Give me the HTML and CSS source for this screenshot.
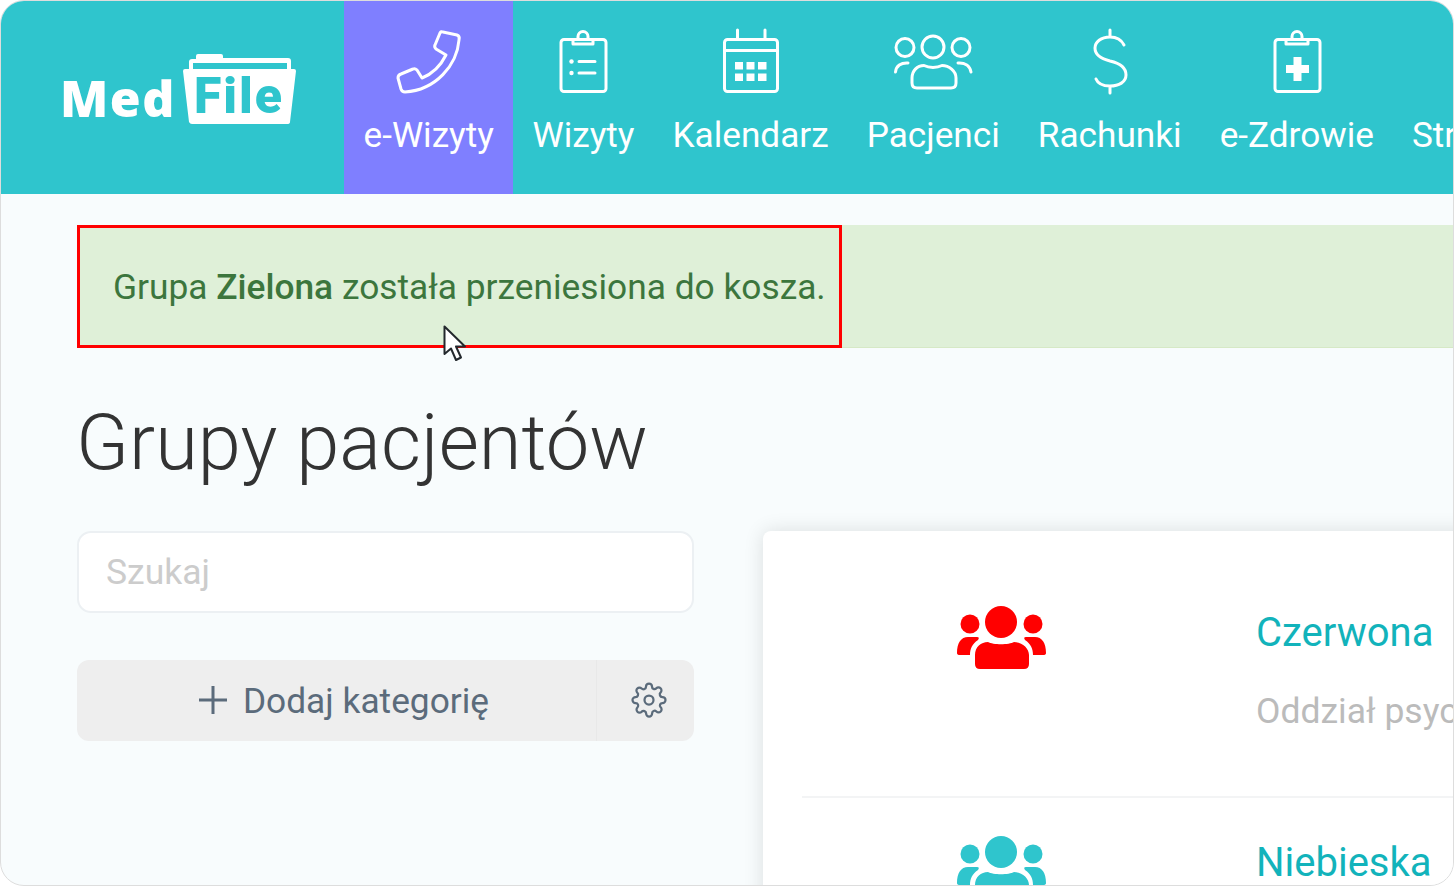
FILE: index.html
```html
<!DOCTYPE html>
<html lang="pl">

<head>
    <meta charset="UTF-8">
    <meta name="viewport" content="width=device-width, initial-scale=1.0">
    <title>Grupy pacjentów</title>
    <link rel="stylesheet" href="styles.css">
</head>

<body>
    <svg class="defs" width="0" height="0">
        <symbol id="group" viewBox="956 605 92 66">
            <circle cx="1001" cy="622" r="16" />
            <circle cx="970" cy="624" r="9.5" />
            <circle cx="1033" cy="624" r="9.5" />
            <path d="M975 664V655C975 647 981 642 988 642C993 645 1009 645 1014 642C1022 642 1029 648 1029 655V664Q1029 669 1024 669H980Q975 669 975 664Z" />
            <path d="M957 653C957 643 961 637 968 637H977Q980 637 978 640C972 644 970 649 970 655H960Q957 655 957 653Z" />
            <path d="M1046 653C1046 643 1042 637 1035 637H1026Q1023 637 1025 640C1031 644 1033 649 1033 655H1043Q1046 655 1046 653Z" />
        </symbol>
    </svg>

    <div class="frame">
        <header class="topbar">
            <a class="logo">
                <span class="logo-med">Med</span>
                <span class="logo-file">
                    <svg class="folder" viewBox="181 51 116 75">
                        <path d="M188 69V62Q188 59 191 59H195V56Q195 54 197 54H220Q222 54 222 56V58H287Q290 58 290 61V69H286V63H192V69Z" />
                        <path d="M182 71Q182 69 184 69H293Q295 69 295 71L289 122Q289 124 286 124H191Q189 124 188 122Z" />
                    </svg>
                    <span class="logo-file-text">File</span>
                </span>
            </a>
            <nav class="nav">
                <a class="nav-item active">
                    <svg class="nav-icon" viewBox="396 28 68 68" width="68">
                        <path d="M444 32L458 35Q461 36 460 40C458 65 437 90 406 92Q403 92 402 89L399 78Q399 75 402 74L414 69Q416 68 418 70L423 78C433 74 442 65 447 55L437 49Q435 47 436 45L441 33Q442 31 444 32Z" />
                    </svg>
                    e-Wizyty
                </a>
                <a class="nav-item">
                    <svg class="nav-icon" viewBox="550 28 68 68" width="68">
                        <rect x="562" y="39.5" width="45" height="52" rx="3" />
                        <path d="M574 39.5V44H594V39.5M579 39.5V36.5A5 5 0 0 1 589 36.5V39.5" />
                        <path d="M580 61.5H596M580 73H596" />
                        <circle class="solid" cx="572.5" cy="61.5" r="2.2" />
                        <circle class="solid" cx="572.5" cy="73" r="2.2" />
                    </svg>
                    Wizyty
                </a>
                <a class="nav-item">
                    <svg class="nav-icon" viewBox="717 28 68 68" width="68">
                        <rect x="724.5" y="39.5" width="53" height="52" rx="3" />
                        <path d="M724.5 50.5H777.5M737.5 30V39.5M765 30V39.5" />
                        <path class="solid" d="M735 62h8v7.500h-8zM746.500 62h8v7.500h-8zM758 62h8.500v7.500h-8.500zM735 73.500h8v7.500h-8zM746.500 73.500h8v7.500h-8zM758 73.500h8.500v7.500h-8.500z" />
                    </svg>
                    Kalendarz
                </a>
                <a class="nav-item">
                    <svg class="nav-icon" viewBox="892 28 82 68" width="82">
                        <circle cx="933" cy="47" r="11" />
                        <circle cx="905" cy="47.500" r="9" />
                        <circle cx="961" cy="47.500" r="9" />
                        <path d="M912 83V78C912 71 917 65.500 924 65.500C929 68 937 68 942 65.500C949 65.500 956 71 956 78V83Q956 88 951 88H917Q912 88 912 83Z" />
                        <path d="M895.500 72C896 66 901 62.500 908 63M971 72C970 66 965 62.500 958 63" />
                    </svg>
                    Pacjenci
                </a>
                <a class="nav-item">
                    <svg class="nav-icon" viewBox="1075 28 68 68" width="68">
                        <path d="M1123 45C1120 39 1115 37 1109 37C1100 37 1094 42 1094 48C1094 56 1101 59 1109 61C1118 63 1125 67 1125 75C1125 82 1118 86 1109 86C1102 86 1097 84 1095 79M1109 30V37M1109 86V93" />
                    </svg>
                    Rachunki
                </a>
                <a class="nav-item">
                    <svg class="nav-icon" viewBox="1262 28 68 68" width="68">
                        <rect x="1274" y="39.500" width="45" height="52" rx="3" />
                        <path d="M1285 39.500V44H1307V39.500M1291 39.500V36.500A5 5 0 0 1 1301 36.500V39.500" />
                        <path class="solid" d="M1292.500 57H1300.500V65H1308V73H1300.500V81H1292.500V73H1285V65H1292.500Z" />
                    </svg>
                    e-Zdrowie
                </a>
                <a class="nav-item">
                    <span class="nav-icon"></span>
                    Strony
                </a>
            </nav>
        </header>

        <main class="content">
            <div class="alert">
                <p>Grupa <b>Zielona</b> została przeniesiona do kosza.</p>
                <span class="highlight"></span>
                <svg class="cursor" viewBox="0 0 24 38" width="24" height="38">
                    <path d="M1.500 1.500V29L8 23.500L13 35L18 32.500L13 21.500H22Z" />
                </svg>
            </div>

            <h1>Grupy pacjentów</h1>

            <div class="columns">
                <aside class="side">
                    <input class="search" type="text" placeholder="Szukaj">
                    <div class="add-row">
                        <button class="add-btn">
                            <svg class="plus" viewBox="0 0 28 28" width="28" height="28">
                                <path d="M14 0V28M0 14H28" />
                            </svg>
                            Dodaj kategorię
                        </button>
                        <button class="gear-btn">
                            <svg class="gear" viewBox="0 0 24 24" width="36" height="36">
                                <circle cx="12" cy="12" r="3" />
                                <path d="M19.400 15a1.650 1.650 0 0 0 .33 1.820l.06.06a2 2 0 0 1 0 2.830 2 2 0 0 1-2.830 0l-.06-.06a1.650 1.650 0 0 0-1.820-.33 1.650 1.650 0 0 0-1 1.510V21a2 2 0 0 1-2 2 2 2 0 0 1-2-2v-.09A1.650 1.650 0 0 0 9 19.400a1.650 1.650 0 0 0-1.820.33l-.06.06a2 2 0 0 1-2.830 0 2 2 0 0 1 0-2.830l.06-.06a1.650 1.650 0 0 0 .33-1.820 1.650 1.650 0 0 0-1.510-1H3a2 2 0 0 1-2-2 2 2 0 0 1 2-2h.09A1.650 1.650 0 0 0 4.600 9a1.650 1.650 0 0 0-.33-1.820l-.06-.06a2 2 0 0 1 0-2.830 2 2 0 0 1 2.830 0l.06.06a1.650 1.650 0 0 0 1.820.33H9a1.650 1.650 0 0 0 1-1.510V3a2 2 0 0 1 2-2 2 2 0 0 1 2 2v.09a1.650 1.650 0 0 0 1 1.510 1.650 1.650 0 0 0 1.820-.33l.06-.06a2 2 0 0 1 2.830 0 2 2 0 0 1 0 2.830l-.06.06a1.650 1.650 0 0 0-.33 1.820V9a1.650 1.650 0 0 0 1.510 1H21a2 2 0 0 1 2 2 2 2 0 0 1-2 2h-.09a1.650 1.650 0 0 0-1.510 1z" />
                            </svg>
                        </button>
                    </div>
                </aside>

                <section class="card">
                    <div class="group-row">
                        <svg class="group-icon red"><use href="#group" /></svg>
                        <div class="group-text">
                            <a class="group-name">Czerwona</a>
                            <p class="group-desc">Oddział psychiatryczny</p>
                        </div>
                    </div>
                    <div class="group-row">
                        <svg class="group-icon teal"><use href="#group" /></svg>
                        <div class="group-text">
                            <a class="group-name">Niebieska</a>
                        </div>
                    </div>
                </section>
            </div>
        </main>
    </div>
</body>

</html>
```

FILE: styles.css
```css
* {
    margin: 0;
    padding: 0;
    box-sizing: border-box;
}

body {
    font-family: Roboto, "Liberation Sans", sans-serif;
    background-color: #fff;
}

.defs {
    display: block;
    height: 0;
}

.frame {
    width: 1454px;
    height: 886px;
    border: 1px solid #ddd;
    border-radius: 24px;
    overflow: hidden;
    background-color: #f8fcfd;
}

/* Górny pasek */
.topbar {
    display: flex;
    height: 193px;
    background-color: #2fc5cd;
    color: #fff;
}

.logo {
    display: flex;
    flex: none;
    width: 343px;
    padding: 50px 0 0 59px;
    gap: 6px;
}

.logo-med {
    width: 116px;
    margin-top: 21px;
    font-family: "Open Sans", sans-serif;
    font-size: 50px;
    font-weight: 800;
    line-height: 52px;
    height: 52px;
    letter-spacing: 1.500px;
}

.logo-file {
    position: relative;
    width: 114px;
    height: 74px;
}

.folder {
    display: block;
    width: 116px;
    height: 75px;
    fill: #fff;
}

.logo-file-text {
    position: absolute;
    left: 12px;
    top: 18px;
    color: #2fc5cd;
    font-size: 50px;
    font-weight: 900;
    line-height: 54px;
    letter-spacing: 2px;
}

.nav {
    display: flex;
    flex: none;
}

.nav-item {
    display: flex;
    flex-direction: column;
    align-items: center;
    height: 193px;
    padding: 27px 19px 0;
    font-size: 35.200px;
    line-height: 40px;
    white-space: nowrap;
}

.nav-item.active {
    padding: 27px 19.500px 0;
    background-color: #7f7fff;
}

.nav-icon {
    display: block;
    height: 68px;
    margin-bottom: 19px;
    fill: none;
    stroke: #fff;
    stroke-width: 3;
    stroke-linecap: round;
    stroke-linejoin: round;
}

.nav-icon .solid {
    fill: #fff;
    stroke: none;
}

/* Treść */
.content {
    padding: 31px 0 0 76px;
}

.alert {
    position: relative;
    display: flex;
    align-items: center;
    height: 123px;
    padding: 2px 0 0 36px;
    background-color: #dff0d8;
    border-bottom: 1px solid #d6e9c6;
    color: #3c763d;
    font-size: 35.300px;
    white-space: nowrap;
}

.alert b {
    font-weight: 500;
}

.highlight {
    position: absolute;
    left: 0;
    top: 0;
    width: 765px;
    height: 123px;
    border: 3px solid #f00;
}

.cursor {
    position: absolute;
    left: 366px;
    top: 100px;
    fill: #fff;
    stroke: #23282d;
    stroke-width: 2;
    stroke-linejoin: round;
}

h1 {
    margin-top: 47px;
    height: 89px;
    margin-left: -1px;
    color: #333;
    font-size: 77.600px;
    font-weight: 300;
    line-height: 96px;
    white-space: nowrap;
}

.columns {
    display: flex;
    gap: 69px;
    margin-top: 47px;
}

.side {
    flex: none;
    width: 617px;
}

.search {
    display: block;
    width: 100%;
    height: 82px;
    padding: 0 27px;
    border: 2px solid #ecf0f3;
    border-radius: 14px;
    background-color: #fff;
    font-family: inherit;
    font-size: 35.500px;
}

.search::placeholder {
    color: #ccc;
}

.add-row {
    display: flex;
    height: 81px;
    margin-top: 47px;
    border-radius: 12px;
    overflow: hidden;
}

.add-row button {
    border: 0;
    background-color: #eee;
    color: #5b6b7b;
    font-family: inherit;
    font-size: 35.300px;
}

.add-row .add-btn {
    display: flex;
    flex: 1;
    align-items: center;
    justify-content: center;
    gap: 16px;
    padding-left: 15px;
    border-right: 1px solid #e8e8e8;
}

.plus {
    margin-top: -2px;
    fill: none;
    stroke: #5b6b7b;
    stroke-width: 3;
}

.add-row .gear-btn {
    display: flex;
    flex: none;
    align-items: center;
    justify-content: center;
    width: 97px;
    padding: 0 0 2px 6px;
}

.gear {
    fill: none;
    stroke: #5b6b7b;
    stroke-width: 1.500;
}

.card {
    flex: none;
    width: 900px;
    height: 500px;
    padding: 37px 0 0 39px;
    border-radius: 8px;
    background-color: #fff;
    box-shadow: 0 0 20px rgba(0, 0, 0, 0.12);
}

.group-row {
    display: flex;
    gap: 56px;
    height: 230px;
    padding-top: 38px;
    border-bottom: 2px solid #f3f4f5;
}

.group-icon {
    flex: none;
    width: 92px;
    height: 66px;
    margin: -1px 152px 0 154px;
}

.group-icon.red {
    fill: #f00;
}

.group-icon.teal {
    fill: #2fc5cd;
}

.group-text {
    margin-top: 1px;
    white-space: nowrap;
}

.group-name {
    display: block;
    color: #12b3bb;
    font-size: 40px;
    line-height: 52px;
}

.group-desc {
    margin-top: 32px;
    color: #bbb;
    font-size: 35.500px;
    line-height: 40px;
}
```
